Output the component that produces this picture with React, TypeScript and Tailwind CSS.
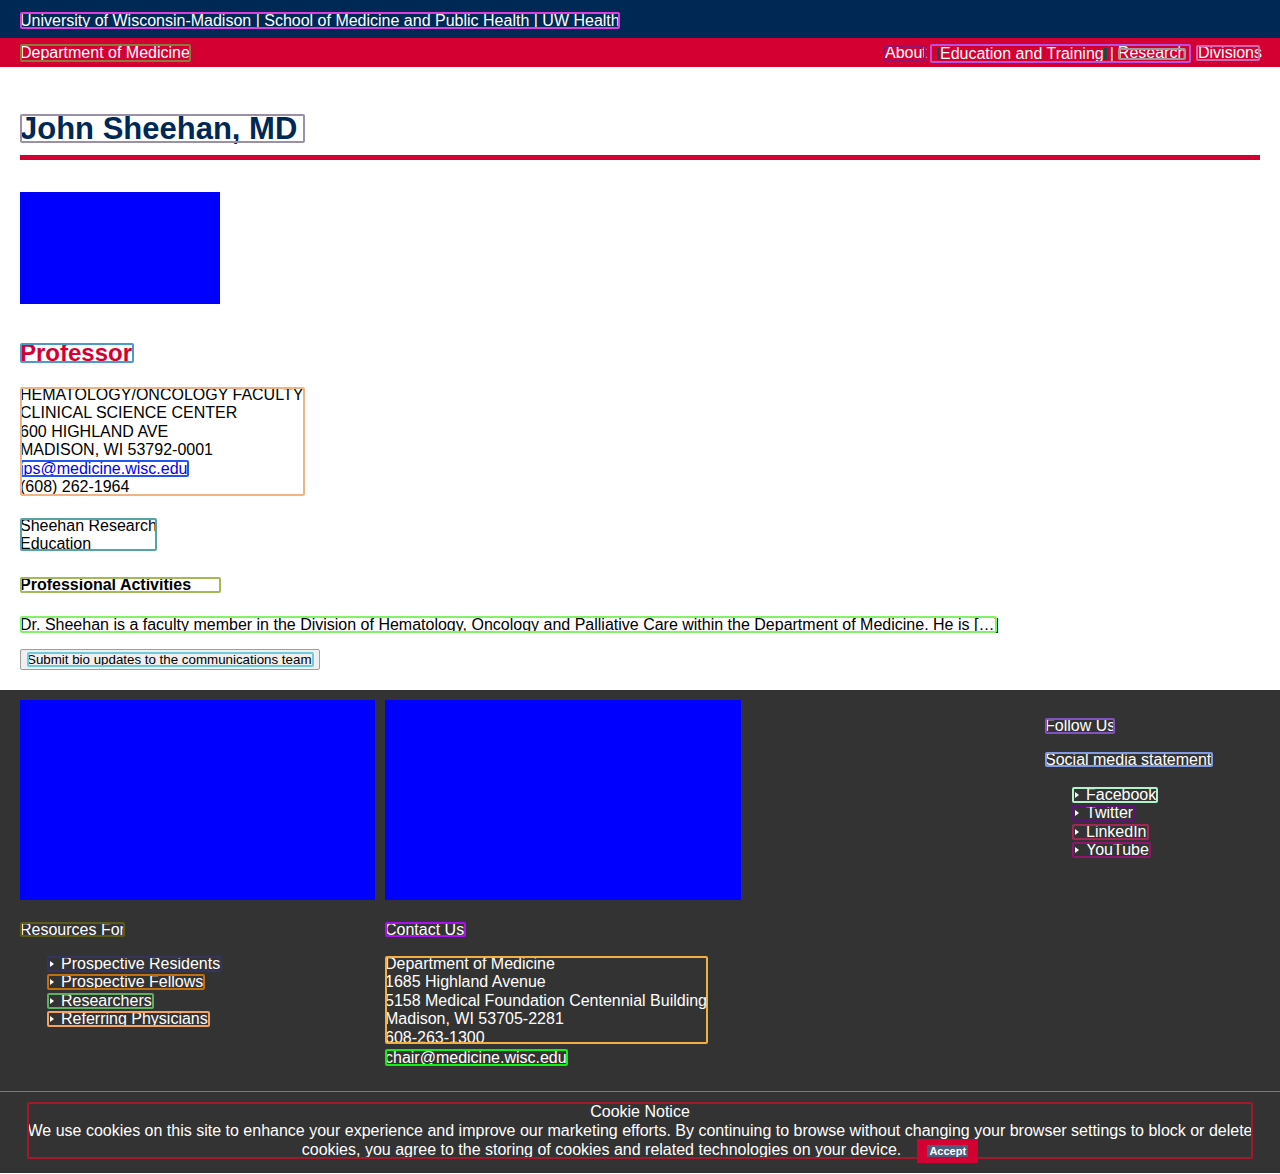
import { ReactNode } from "react";

type BoxProps = {
  color: string;
  className?: string;
  children?: ReactNode;
};

// Debug-style outline boxes that appear in the reference picture
const Box = ({ color, className = "", children }: BoxProps) => (
  <span
    className={`inline-block whitespace-nowrap rounded-[2px] align-top ${className}`}
    style={{ outline: `2px solid ${color}`, outlineOffset: "-2px" }}
  >
    {children}
  </span>
);

const Bullet = () => (
  <span className="mr-[7px] inline-block h-0 w-0 border-y-[3px] border-l-[4px] border-y-transparent border-l-white align-[2px]" />
);

const resources: [string, string][] = [
  ["Prospective Residents", "#34345f"],
  ["Prospective Fellows", "#c2700f"],
  ["Researchers", "#5fae62"],
  ["Referring Physicians", "#f2a266"],
];

const social: [string, string][] = [
  ["Facebook", "#b4f2cc"],
  ["Twitter", "#60107c"],
  ["LinkedIn", "#a42656"],
  ["YouTube", "#8e1470"],
];

const LinkList = ({ items }: { items: [string, string][] }) => (
  <ul className="flex flex-col gap-[2.4px] pl-[27px]">
    {items.map(([label, color]) => (
      <li key={label} className="flex h-[16px]">
        <Box color={color} className="h-[16px] pl-[3px] pr-[2px] leading-[16px]">
          <Bullet />
          {label}
        </Box>
      </li>
    ))}
  </ul>
);

export default function App() {
  return (
    <div className="min-h-[1174px] bg-white font-['Liberation_Sans',Arial,sans-serif] text-[16px] text-black">
      {/* university bar */}
      <div className="flex h-[38px] items-start bg-[#002855] px-5 pt-[12px]">
        <Box color="#dc3fdc" className="h-[17px] w-[600px] leading-[17px] text-white">
          University of Wisconsin-Madison | School of Medicine and Public Health | UW Health
        </Box>
      </div>

      {/* department bar */}
      <div className="flex h-[29px] items-start justify-between bg-[#d40032] px-5 pt-[6px] text-white">
        <Box color="#8a7b3c" className="h-[18px] w-[171px] leading-[18px]">
          Department of Medicine
        </Box>
        <div className="flex items-start">
          <Box color="#8c1672" className="mt-px h-[16px] w-[43px] pl-[2px] leading-[16px]">
            About
          </Box>
          <Box color="#b652e2" className="ml-[4px] h-[19px] w-[261px] pl-[7px] leading-[19px]">
            <span className="flex h-[19px] items-center">
              <span className="h-[12px] w-[3px] bg-[#184a4a]" />
              <span>Education and Training</span>
              <span className="h-[12px] w-[3px] bg-[#184a4a]" />
              <span className="ml-[3px]">|</span>
              <Box color="#9c9c9c" className="ml-[4px] h-[12px] w-[68px] leading-[10px]">
                Research
              </Box>
            </span>
          </Box>
          <Box color="#d468b0" className="ml-[5px] mt-px h-[16px] w-[64px] pl-[2px] leading-[16px]">
            Divisions
          </Box>
        </div>
      </div>

      {/* profile */}
      <main className="px-5 pb-[20px]">
        <div className="flex pt-[47px]">
          <Box color="#9b90aa" className="h-[29px] w-[285px] text-[31px] font-bold leading-[29px] text-[#002855]">
            John Sheehan, MD
          </Box>
        </div>
        <div className="mt-[12px] h-[5px] bg-[#d40032]" />

        <div className="mt-[32px] h-[112px] w-[200px] bg-[#0000ff]" />

        <div className="mt-[39px] flex">
          <Box color="#4b9bc9" className="h-[20px] w-[114px] text-[24px] font-bold leading-[20px] text-[#d40032]">
            Professor
          </Box>
        </div>

        <div className="mt-[24px] flex">
          <Box color="#f0b484" className="h-[109px] w-[285px] overflow-hidden leading-[18.4px]">
            <div className="-mt-[1px]">
              <div>HEMATOLOGY/ONCOLOGY FACULTY</div>
              <div>CLINICAL SCIENCE CENTER</div>
              <div>600 HIGHLAND AVE</div>
              <div>MADISON, WI 53792-0001</div>
              <div className="flex h-[18.4px] items-start">
                <Box color="#2356ee" className="h-[17px] w-[169px] leading-[17px]">
                  <a href="#" className="text-[#0000ee] underline">
                    jps@medicine.wisc.edu
                  </a>
                </Box>
              </div>
              <div>(608) 262-1964</div>
            </div>
          </Box>
        </div>

        <div className="mt-[22px] flex">
          <Box color="#55a3a3" className="h-[33px] w-[137px] overflow-hidden leading-[18px]">
            <div className="-mt-[1px]">
              <div>Sheehan Research</div>
              <div>Education</div>
            </div>
          </Box>
        </div>

        <div className="mt-[26px] flex">
          <Box color="#a3b955" className="h-[16px] w-[201px] font-bold leading-[16px]">
            Professional Activities
          </Box>
        </div>

        <div className="mt-[23px] flex">
          <Box color="#84f266" className="h-[17px] w-[977px] leading-[17px]">
            Dr. Sheehan is a faculty member in the Division of Hematology, Oncology and Palliative Care within the Department of Medicine. He is [&hellip;]
          </Box>
        </div>

        <div className="mt-[16px] flex">
          <button className="flex h-[21px] w-[300px] items-center rounded-[2px] border border-[#9f9f9f] bg-[#efefef] pl-[6px] text-[13.33px]">
            <Box color="#6dcbda" className="h-[15px] w-[287px] text-left leading-[15px]">
              Submit bio updates to the communications team
            </Box>
          </button>
        </div>
      </main>

      {/* footer */}
      <footer className="bg-[#333333] text-white">
        <div className="flex items-start px-5 pt-[10px]">
          <div className="w-[355px]">
            <div className="h-[200px] bg-[#0000ff]" />
            <div className="mt-[22px] flex">
              <Box color="#5a5a1a" className="h-[15px] w-[105px] leading-[15px]">
                Resources For
              </Box>
            </div>
            <div className="mt-[19px]">
              <LinkList items={resources} />
            </div>
          </div>

          <div className="ml-[10px] w-[356px]">
            <div className="h-[200px] bg-[#0000ff]" />
            <div className="mt-[22px] flex">
              <Box color="#a812f0" className="h-[15px] w-[81px] leading-[15px]">
                Contact Us
              </Box>
            </div>
            <div className="mt-[19px] flex">
              <Box color="#f2b042" className="h-[88px] w-[323px] overflow-hidden leading-[18.4px]">
                <div className="-mt-[1px]">
                  <div>Department of Medicine</div>
                  <div>1685 Highland Avenue</div>
                  <div>5158 Medical Foundation Centennial Building</div>
                  <div>Madison, WI 53705-2281</div>
                  <div>608-263-1300</div>
                </div>
              </Box>
            </div>
            <div className="mt-[5px] flex">
              <Box color="#12f012" className="h-[17px] w-[183px] leading-[17px]">
                chair@medicine.wisc.edu
              </Box>
            </div>
          </div>

          <div className="ml-auto w-[215px] pt-[18px]">
            <div className="flex">
              <Box color="#8352c2" className="h-[16px] w-[70px] leading-[16px]">
                Follow Us
              </Box>
            </div>
            <div className="mt-[18px] flex">
              <Box color="#829ae2" className="h-[15px] w-[168px] leading-[15px]">
                Social media statement
              </Box>
            </div>
            <div className="mt-[20px]">
              <LinkList items={social} />
            </div>
          </div>
        </div>

        <div className="mt-[25px] h-px bg-[#7a7a7a]" />

        {/* cookie notice */}
        <div className="px-[27px] pb-[14px] pt-[11px]">
          <div
            className="h-[57px] rounded-[2px] text-center leading-[19px]"
            style={{ outline: "2px solid #a3182b", outlineOffset: "-2px" }}
          >
            <div className="-mt-[1px]">Cookie Notice</div>
            <div className="whitespace-nowrap">
              We use cookies on this site to enhance your experience and improve our marketing efforts. By continuing to browse without changing your browser settings to block or delete
            </div>
            <div className="whitespace-nowrap">
              cookies, you agree to the storing of cookies and related technologies on your device.
              <span className="relative -top-[1px] ml-[16px] inline-flex h-[24px] w-[61px] items-center justify-center bg-[#d40032] align-top">
                <span className="h-[12px] w-[41px] bg-[#4e5c7e] text-[11px] font-bold leading-[12px] text-white">
                  Accept
                </span>
              </span>
            </div>
          </div>
        </div>
      </footer>
    </div>
  );
}
